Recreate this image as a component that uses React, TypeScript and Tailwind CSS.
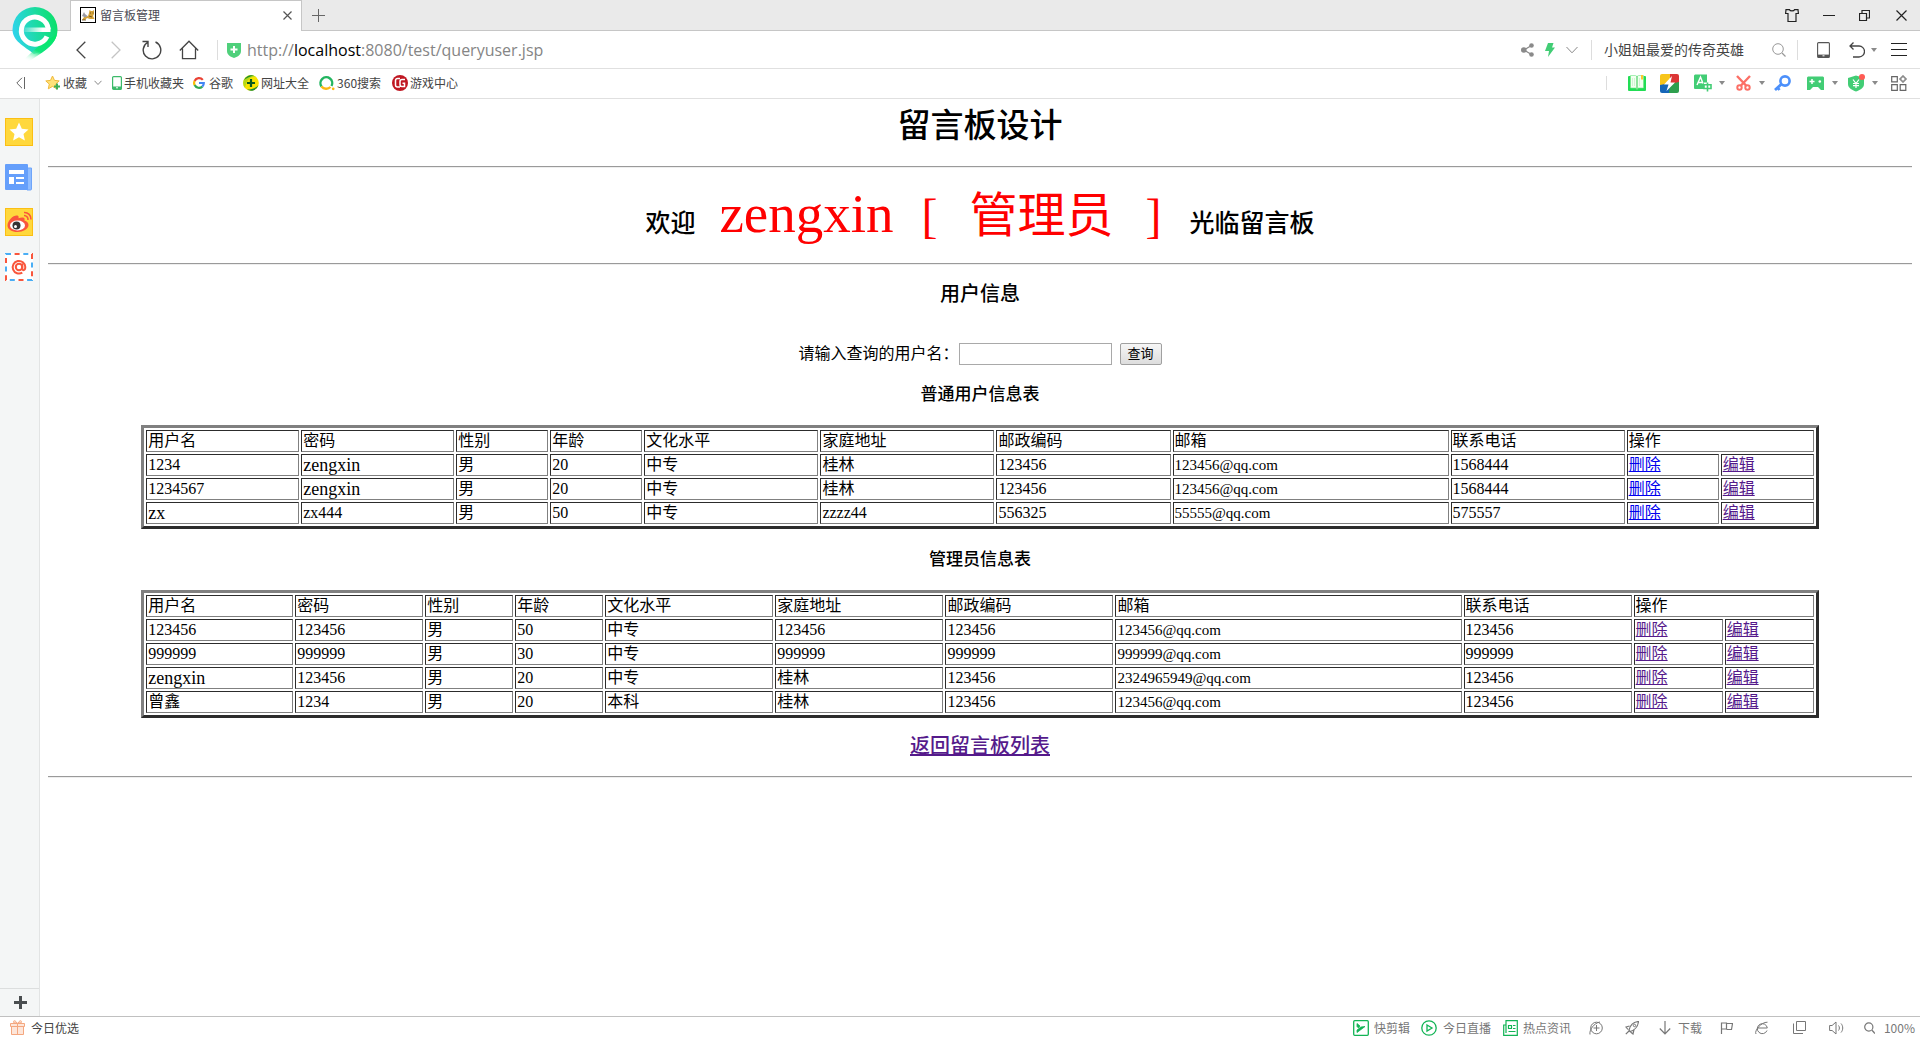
import React from "react";

type IconProps = { className?: string };

/* ---------- shared small pieces ---------- */

const Stroke = ({
  w,
  h,
  children,
  className = "",
}: {
  w: number;
  h: number;
  children: React.ReactNode;
  className?: string;
}) => (
  <svg
    width={w}
    height={h}
    viewBox={`0 0 ${w} ${h}`}
    fill="none"
    stroke="currentColor"
    className={`shrink-0 ${className}`}
    aria-hidden="true"
  >
    {children}
  </svg>
);

const Caret = ({ className = "" }: IconProps) => (
  <svg width="6" height="4" viewBox="0 0 6 4" className={`shrink-0 ${className}`} aria-hidden="true">
    <path d="M0 0h6L3 4z" fill="#8a8a8a" />
  </svg>
);

const IconButton = ({
  label,
  className = "",
  children,
}: {
  label: string;
  className?: string;
  children: React.ReactNode;
}) => (
  <button type="button" aria-label={label} className={`flex shrink-0 items-center ${className}`}>
    {children}
  </button>
);

/* ---------- icons ---------- */

const BrowserLogo = () => (
  <svg width="46" height="56" viewBox="0 0 46 56" aria-hidden="true">
    <defs>
      <linearGradient id="logoBody" x1="0" y1="0.6" x2="1" y2="0.4">
        <stop offset="0" stopColor="#2fd3ee" />
        <stop offset="0.55" stopColor="#1cdba4" />
        <stop offset="1" stopColor="#0be06a" />
      </linearGradient>
      <linearGradient id="logoTail" x1="0.8" y1="0" x2="0.2" y2="1">
        <stop offset="0" stopColor="#04e868" />
        <stop offset="0.6" stopColor="#10e57c" />
        <stop offset="1" stopColor="#ffffff" stopOpacity="0" />
      </linearGradient>
      <linearGradient id="logoBar" x1="0" y1="0" x2="1" y2="0">
        <stop offset="0" stopColor="#ffffff" stopOpacity="0.15" />
        <stop offset="0.7" stopColor="#ffffff" />
      </linearGradient>
    </defs>
    <path d="M23 0a22.500 22.500 0 0 1 22.500 22.500c0 9-5 15-12 20.500L22 47C12 39 .5 34 .5 22.500A22.500 22.500 0 0 1 23 0z" fill="url(#logoBody)" />
    <path d="M45 27c-2 9-8 13-14 18L16 55 10 54 28 38z" fill="url(#logoTail)" />
    <path
      d="M35 29.500A13.500 13.500 0 1 1 36.300 22.500"
      fill="none"
      stroke="#fff"
      strokeWidth="5"
    />
    <path d="M12 20.500h26.500v4.500H12z" fill="url(#logoBar)" />
  </svg>
);

const CatIcon = () => (
  <svg width="16" height="16" viewBox="0 0 16 16" aria-hidden="true">
    <rect x="0.5" y="0.5" width="15" height="15" fill="#fff" stroke="#000" />
    <path d="M2 13l2-3 4-1 1-3 .5-3 1.500 1h1.500L14 3v4l-1 2 1.500 3H10l-3-1-2 2z" fill="#d6a53c" />
    <path d="M2 9l2-4 1 2 2.500 2-2 1.500z" fill="#9a9aa3" />
    <path d="M2 13h4M10 6h1M12.500 6h1M9 9l3 1" stroke="#5a4314" strokeWidth="0.800" />
  </svg>
);

const ShieldPlus = () => (
  <svg width="14" height="16" viewBox="0 0 14 16" aria-hidden="true">
    <path d="M0 1h14v8c0 4-4 6-7 7-3-1-7-3-7-7z" fill="#4fd07b" />
    <path d="M7 4v7M3.500 7.500h7" stroke="#fff" strokeWidth="2" />
  </svg>
);

const StarPlus = () => (
  <svg width="16" height="16" viewBox="0 0 16 16" className="shrink-0" aria-hidden="true">
    <path d="M7.500 1l2 4.400 4.700.5-3.500 3.200 1 4.700-4.200-2.400-4.200 2.400 1-4.700L.8 5.900l4.700-.5z" fill="#ffe27a" stroke="#f0b93a" />
    <path d="M12 8.500v6M9 11.500h6" stroke="#41ad55" strokeWidth="2" />
  </svg>
);

const PhoneGreen = () => (
  <svg width="10" height="14" viewBox="0 0 10 14" className="shrink-0" aria-hidden="true">
    <rect x="0.6" y="0.6" width="8.800" height="12.800" rx="1" fill="#fff" stroke="#3dba6a" strokeWidth="1.200" />
    <path d="M1 10.500h8V13H1z" fill="#3dba6a" />
    <path d="M4 11.800h2" stroke="#fff" />
  </svg>
);

const GoogleG = () => (
  <svg width="12" height="12" viewBox="0 0 12 12" className="shrink-0" fill="none" strokeWidth="2.200" aria-hidden="true">
    <path d="M9.800 2.900A4.900 4.900 0 0 0 1.600 3.900" stroke="#ea4335" />
    <path d="M1.600 3.900a4.900 4.900 0 0 0 0 4.200" stroke="#fbbc05" />
    <path d="M1.600 8.100a4.900 4.900 0 0 0 7.700 1.500" stroke="#34a853" />
    <path d="M9.300 9.600A4.900 4.900 0 0 0 10.800 6H6" stroke="#4285f4" />
  </svg>
);

const NavBall = () => (
  <svg width="16" height="16" viewBox="0 0 16 16" className="shrink-0" aria-hidden="true">
    <circle cx="8" cy="8" r="7.800" fill="#f7e400" />
    <path d="M2 13A7.800 7.800 0 0 1 13 2C8 1 4 4 2 13z" fill="#b5d816" />
    <path d="M1 5A7.800 7.800 0 0 1 11 .8C7 1 4 3 1 5zM4 14.600A7.800 7.800 0 0 0 15.500 10C13 13 9 14.500 4 14.600z" fill="#188a34" />
    <path d="M8 4v8M4 8h8" stroke="#085a20" strokeWidth="2.200" />
  </svg>
);

const SearchRing = () => (
  <svg width="16" height="16" viewBox="0 0 16 16" className="shrink-0" fill="none" strokeWidth="2.400" aria-hidden="true">
    <path d="M2.500 11.500A5.900 5.900 0 1 1 12.500 11" stroke="#23b560" />
    <path d="M2.500 11.500A6 6 0 0 0 11.500 12" stroke="#fdb813" />
    <circle cx="14.200" cy="13.800" r="0.700" stroke="#fdb813" strokeWidth="1.400" />
  </svg>
);

const GameBadge = () => (
  <svg width="16" height="16" viewBox="0 0 16 16" className="shrink-0" fill="none" aria-hidden="true">
    <circle cx="8" cy="8" r="8" fill="#c01722" />
    <path d="M8 3.500H5.500A2 2 0 0 0 3.500 5.500v4.500a2 2 0 0 0 2 2H8M13 4.500H10a2 2 0 0 0-2 2v3a2 2 0 0 0 2 2h2.500V8.200H10.500" stroke="#fff" strokeWidth="1.500" />
  </svg>
);

const BookIcon = () => (
  <svg width="18" height="18" viewBox="0 0 18 18" className="shrink-0" aria-hidden="true">
    <rect x="0" y="2" width="18" height="15" rx="1" fill="#22dd55" />
    <path d="M2.500 1.500h5L9 2.500v12.500l-1.500-1h-5zM15.500 1.500h-5L9 2.500v12.500l1.500-1h5z" fill="#f2fff0" stroke="#6fe587" strokeWidth="0.600" />
    <path d="M9 2v14" stroke="#6fd67f" />
    <path d="M4.500 4v8M6.500 4v8M11.500 4v8" stroke="#d2f3d4" />
    <path d="M13 1h2v5l-1-1-1 1z" fill="#ffc62e" />
  </svg>
);

const ColorBolt = () => (
  <svg width="19" height="19" viewBox="0 0 19 19" className="shrink-0" aria-hidden="true">
    <clipPath id="boltClip">
      <rect width="19" height="19" rx="2" />
    </clipPath>
    <g clipPath="url(#boltClip)">
      <path d="M0 0h12L7 10 0 12z" fill="#f7c51b" />
      <path d="M10 0h9v9l-9 1z" fill="#dc3636" />
      <path d="M19 8v11H8l2-9z" fill="#2e9f4e" />
      <path d="M0 11l10-2-1 10H0z" fill="#1666b8" />
      <path d="M12 2L4 10.500h4.500L6.500 17l8.500-8.500h-4.500z" fill="#fff" />
    </g>
  </svg>
);

const TranslateIcon = () => (
  <svg width="18" height="18" viewBox="0 0 18 18" className="shrink-0" fill="none" aria-hidden="true">
    <path d="M1 0.500h12v8H10V15H1a1 1 0 0 1-1-1V1.500z" fill="#42cd75" />
    <path d="M3 11L6.500 3 9 9.500M4.500 8.500h4" stroke="#fff" strokeWidth="1.400" />
    <path d="M13.500 8.500v9M10 10.800h7v3.700h-7z" stroke="#42cd75" strokeWidth="1.600" />
  </svg>
);

const ScissorsRed = () => (
  <svg width="15" height="16" viewBox="0 0 15 16" className="shrink-0" fill="none" stroke="#fc6f66" strokeWidth="2.400" aria-hidden="true">
    <path d="M1 1l9.500 10M14 1L4.500 11" />
    <circle cx="3.500" cy="12.500" r="2.200" strokeWidth="2" />
    <circle cx="11.500" cy="12.500" r="2.200" strokeWidth="2" />
  </svg>
);

const KeyBlue = () => (
  <svg width="17" height="16" viewBox="0 0 17 16" className="shrink-0" fill="none" stroke="#4c90fb" aria-hidden="true">
    <circle cx="11" cy="6" r="4.600" strokeWidth="2.600" />
    <path d="M7.500 9L1 15M3.500 12.500l2 2.500" strokeWidth="2.800" />
  </svg>
);

const Gamepad = () => (
  <svg width="17" height="15" viewBox="0 0 17 15" className="shrink-0" aria-hidden="true">
    <path d="M1 0.500h15l1 1V14h-3l-3-3H6l-3 3H0V1.500z" fill="#42cd75" />
    <path d="M5 3v5M2.500 5.500h5" stroke="#fff" strokeWidth="1.500" />
    <circle cx="12.800" cy="5.500" r="1.300" fill="#fff" />
  </svg>
);

const YuanShield = () => (
  <svg width="17" height="18" viewBox="0 0 17 18" className="shrink-0" fill="none" aria-hidden="true">
    <path d="M8 1.500l8 2.500v6c0 4-4 6-8 7.500C4 16 0 14 0 10V4z" fill="#42cd75" />
    <path d="M5 5.500l3 4 3-4M8 9.500V14M5 9.500h6M5 11.700h6" stroke="#fff" strokeWidth="1.200" />
    <circle cx="14" cy="3" r="3" fill="#ff5b54" />
  </svg>
);

/* ---------- top bars ---------- */

const TabBar = () => (
  <header className="flex h-[31px] border-b border-[#c6c6c6] bg-[#eaeaea] pl-[70px]">
    <div className="-mb-px flex h-[31px] w-[232px] items-center border-x border-t border-[#c6c6c6] bg-white pr-[9px] pb-0.5 pl-[9px] text-[12px] text-[#4a4a55]">
      <CatIcon />
      <span className="ml-1">留言板管理</span>
      <IconButton label="关闭标签" className="ml-auto text-[#555]">
        <Stroke w={9} h={9}><path d="M.5.5l8 8M8.500.5l-8 8" strokeWidth="1.200" /></Stroke>
      </IconButton>
    </div>
    <IconButton label="新标签" className="ml-[10px] text-[#666]">
      <Stroke w={13} h={13}><path d="M6.500 0v13M0 6.500h13" /></Stroke>
    </IconButton>
    <div className="ml-auto flex items-center pr-[13px] text-[#222]">
      <IconButton label="皮肤">
        <Stroke w={14} h={13}><path d="M4.500.7H1L.6 4.500h2.400v8h8v-8h2.400L13 .7H9.500c-.5 1.500-4.500 1.500-5 0z" strokeWidth="1.200" /></Stroke>
      </IconButton>
      <IconButton label="最小化" className="ml-6">
        <Stroke w={12} h={3}><path d="M0 1.500h12" /></Stroke>
      </IconButton>
      <IconButton label="还原" className="ml-6">
        <Stroke w={11} h={11}><path d="M.5 3.500h7v7h-7zM3 3V.5h7.500V8H8" strokeWidth="1.200" /></Stroke>
      </IconButton>
      <IconButton label="关闭" className="ml-[26px]">
        <Stroke w={11} h={11}><path d="M.5.5l10 10M10.500.5l-10 10" strokeWidth="1.200" /></Stroke>
      </IconButton>
    </div>
  </header>
);

const AddressBar = () => (
  <div className="flex h-[38px] items-center border-b border-[#e0e0e0] bg-white pr-[13px] pl-[76px] text-[#444]">
    <IconButton label="后退">
      <Stroke w={10} h={18}><path d="M9.300.7L1 9l8.300 8.300" strokeWidth="1.300" /></Stroke>
    </IconButton>
    <IconButton label="前进" className="ml-[25px] text-[#c4c4c4]">
      <Stroke w={10} h={18}><path d="M.7.7L9 9 .7 17.300" strokeWidth="1.300" /></Stroke>
    </IconButton>
    <IconButton label="刷新" className="ml-[21px]">
      <Stroke w={20} h={20}><path d="M13.500 2a8.800 8.800 0 1 1-8 .5M.5 1.500H6V7" strokeWidth="1.400" /></Stroke>
    </IconButton>
    <IconButton label="主页" className="ml-[17px]">
      <Stroke w={20} h={20}><path d="M.8 10.500L10 1.200l9.200 9.300M3.500 8.500v10.200h13V8.500" strokeWidth="1.300" /></Stroke>
    </IconButton>
    <span className="ml-[18px] h-5 w-px bg-[#ddd]" />
    <span className="ml-[9px]"><ShieldPlus /></span>
    <p className="ml-[6px] font-['Open_Sans','Noto_Sans',sans-serif] text-[16px] text-[#858585]">
      http://<span className="text-black">localhost</span>:8080/test/queryuser.jsp
    </p>
    <div className="ml-auto flex items-center">
      <IconButton label="分享" className="text-[#8a8a8a]">
        <svg width="13" height="14" viewBox="0 0 13 14" aria-hidden="true">
          <path d="M10.500 2.500L3 7l7.500 4.500" fill="none" stroke="#8a8a8a" strokeWidth="1.300" />
          <g fill="#8a8a8a"><circle cx="10.500" cy="2.500" r="2.300" /><circle cx="2.800" cy="7" r="2.800" /><circle cx="10.500" cy="11.500" r="2.300" /></g>
        </svg>
      </IconButton>
      <IconButton label="极速模式" className="ml-[11px]">
        <svg width="10" height="14" viewBox="0 0 10 14" aria-hidden="true"><path d="M3 0h5.500L7 4.500h3L3 14l1-6H0z" fill="#42cd75" /></svg>
      </IconButton>
      <IconButton label="更多模式" className="ml-[11px] text-[#888]">
        <Stroke w={12} h={8}><path d="M.5 1L6 6.800 11.500 1" /></Stroke>
      </IconButton>
      <span className="ml-[13px] h-5 w-px bg-[#ddd]" />
      <input
        aria-label="搜索"
        defaultValue="小姐姐最爱的传奇英雄"
        className="ml-3 w-[148px] bg-transparent text-[14px] text-[#444] outline-none"
      />
      <IconButton label="开始搜索" className="ml-5 text-[#999]">
        <Stroke w={14} h={14}><circle cx="6" cy="6" r="5.300" /><path d="M10 10l3.500 3.500" strokeWidth="1.200" /></Stroke>
      </IconButton>
      <span className="ml-[11px] h-5 w-px bg-[#ddd]" />
      <IconButton label="手机" className="ml-[19px] text-[#555]">
        <Stroke w={13} h={16}><rect x=".6" y=".6" width="11.800" height="14.800" rx="1" strokeWidth="1.100" /><path d="M1 13.800h11" strokeWidth="2.400" /><path d="M5.500 13.800h2" stroke="#fff" /></Stroke>
      </IconButton>
      <IconButton label="恢复页面" className="ml-[19px]">
        <Stroke w={16} h={16}><path d="M4.500.5L1 4l3.500 3.500M1 4h9a5.500 5.500 0 0 1 0 11H4" strokeWidth="1.300" /></Stroke>
        <Caret className="ml-[6px]" />
      </IconButton>
      <IconButton label="菜单" className="ml-[14px] text-[#222]">
        <Stroke w={16} h={15}><path d="M0 1.500h16M0 7.500h16M0 13.500h16" /></Stroke>
      </IconButton>
    </div>
  </div>
);

const Bookmark = ({
  icon,
  label,
  className,
}: {
  icon: React.ReactNode;
  label: string;
  className: string;
}) => (
  <a href="#" className={`flex items-center gap-0.5 whitespace-nowrap ${className}`}>
    {icon}
    {label}
  </a>
);

const BookmarkBar = () => (
  <nav className="flex h-[30px] items-center border-b border-[#e0e0e0] bg-white pr-[13px] pb-px pl-4 text-[12px] text-[#444]">
    <IconButton label="收起" className="text-[#666]">
      <Stroke w={9} h={12}><path d="M6 .8L.8 6 6 11.200M8.500 0v12" /></Stroke>
    </IconButton>
    <Bookmark icon={<StarPlus />} label="收藏" className="ml-[20px]" />
    <Stroke w={8} h={6} className="ml-[7px] text-[#888]"><path d="M.5.8L4 4.500 7.500.8" /></Stroke>
    <Bookmark icon={<PhoneGreen />} label="手机收藏夹" className="ml-[10px]" />
    <Bookmark icon={<span className="mr-0.5"><GoogleG /></span>} label="谷歌" className="ml-[9px]" />
    <Bookmark icon={<NavBall />} label="网址大全" className="ml-[10px]" />
    <Bookmark icon={<SearchRing />} label="360搜索" className="ml-[10px]" />
    <Bookmark icon={<GameBadge />} label="游戏中心" className="ml-[11px]" />
    <div className="ml-auto flex items-center">
      <span className="h-[14px] w-px bg-[#ddd]" />
      <IconButton label="阅读" className="ml-[21px]"><BookIcon /></IconButton>
      <IconButton label="加速" className="ml-[14px]"><ColorBolt /></IconButton>
      <IconButton label="翻译" className="ml-[15px]"><TranslateIcon /><Caret className="ml-[7px]" /></IconButton>
      <IconButton label="截图" className="ml-[11px]"><ScissorsRed /><Caret className="ml-[8px]" /></IconButton>
      <IconButton label="登录管家" className="ml-[9px]"><KeyBlue /></IconButton>
      <IconButton label="游戏" className="ml-4"><Gamepad /><Caret className="ml-[8px]" /></IconButton>
      <IconButton label="网银" className="ml-[10px]"><YuanShield /><Caret className="ml-[7px]" /></IconButton>
      <IconButton label="扩展" className="ml-[13px] text-[#666]">
        <Stroke w={16} h={16}><path d="M.7 1.700h5.600v5.100H.7zM.7 9.700h5.600v5.600H.7zM9.200 9.700h5.600v5.600H9.200z" strokeWidth="1.200" /><path d="M11 1h2v2h2v2h-2v2h-2V5H9V3h2z" strokeWidth="1" /></Stroke>
      </IconButton>
    </div>
  </nav>
);

/* ---------- left sidebar ---------- */

const Sidebar = () => (
  <aside className="flex w-10 shrink-0 flex-col border-r border-[#e2e4e4] bg-[#f4f6f6]">
    <div className="flex flex-col items-center gap-[17px] pt-[19px] pr-[1px]">
      <IconButton label="收藏夹">
        <svg width="28" height="28" viewBox="0 0 28 28" aria-hidden="true">
          <rect x=".5" y=".5" width="27" height="27" fill="#ffd83d" stroke="#fbbf14" />
          <path d="M14 4.500l2.800 6.200 6.700.7-5 4.500 1.400 6.600L14 19.200l-5.900 3.300 1.400-6.600-5-4.500 6.700-.7z" fill="#fff" />
        </svg>
      </IconButton>
      <IconButton label="新闻">
        <svg width="28" height="28" viewBox="0 0 28 28" aria-hidden="true">
          <path d="M22 5h4.500v21a1 1 0 0 1-1 1H22z" fill="#8fbcff" stroke="#6ea5fa" />
          <rect x="0" y="1" width="23" height="26" rx="1" fill="#659ffb" />
          <path d="M4 7h15v4H4zM4 14h5v7H4zM11 14h8v2h-8zM11 19h8v2h-8z" fill="#fff" />
        </svg>
      </IconButton>
      <IconButton label="微博">
        <svg width="28" height="28" viewBox="0 0 28 28" aria-hidden="true">
          <rect x=".5" y=".5" width="27" height="27" fill="#ffd83d" stroke="#fbbf14" />
          <path d="M2.500 17.500C2.500 12 9 6.500 12.500 7.500c1.200.3 1.300 1.600 1 2.800 2.500-1 5.500-1.200 6 .3.400 1-.2 1.700 0 2 2.500.8 4 2.200 4 4.400 0 4-5.500 7-11 7s-10-2.500-10-6.500z" fill="#f9563c" />
          <ellipse cx="12.500" cy="17.500" rx="7.500" ry="5" fill="#fff" />
          <circle cx="11.500" cy="17.500" r="4" fill="#333" />
          <circle cx="10.500" cy="18.500" r="1.500" fill="#fff" />
          <path d="M19 7.500a4 4 0 0 1 4 4.500M19 4.500a6.500 6.500 0 0 1 7 7" fill="none" stroke="#f9563c" strokeWidth="1.600" />
        </svg>
      </IconButton>
      <IconButton label="邮箱">
        <svg width="28" height="28" viewBox="0 0 28 28" aria-hidden="true">
          <rect width="28" height="28" fill="#fff" />
          <g fill="none" strokeWidth="2">
            <rect x="1" y="1" width="26" height="26" stroke="#49aef5" strokeDasharray="5 12.300" />
            <rect x="1" y="1" width="26" height="26" stroke="#f9563c" strokeDasharray="5 12.300" strokeDashoffset="-8.600" />
          </g>
          <circle cx="14" cy="14" r="3.200" fill="none" stroke="#f9563c" strokeWidth="2" />
          <path d="M17.300 10.500v5c0 2.500 3 2.300 3-1.500a6.300 6.300 0 1 0-3 5.600" fill="none" stroke="#f9563c" strokeWidth="2" />
        </svg>
      </IconButton>
    </div>
    <button
      type="button"
      aria-label="添加"
      className="mt-auto flex h-7 items-center justify-center border-t border-[#dcdede] pl-0.5 text-[#4a4e50]"
    >
      <Stroke w={13} h={13}><path d="M6.500 0v13M0 6.500h13" strokeWidth="3" /></Stroke>
    </button>
  </aside>
);

/* ---------- page content ---------- */

const Rule = ({ className = "" }: IconProps) => (
  <hr className={`h-0.5 border-t border-b border-t-[#9a9a9a] border-b-[#eeeeee] ${className}`} />
);

const HEADERS = ["用户名", "密码", "性别", "年龄", "文化水平", "家庭地址", "邮政编码", "邮箱", "联系电话"];

const NORMAL_USERS = [
  ["1234", "zengxin", "男", "20", "中专", "桂林", "123456", "123456@qq.com", "1568444"],
  ["1234567", "zengxin", "男", "20", "中专", "桂林", "123456", "123456@qq.com", "1568444"],
  ["zx", "zx444", "男", "50", "中专", "zzzz44", "556325", "55555@qq.com", "575557"],
];

const ADMIN_USERS = [
  ["123456", "123456", "男", "50", "中专", "123456", "123456", "123456@qq.com", "123456"],
  ["999999", "999999", "男", "30", "中专", "999999", "999999", "999999@qq.com", "999999"],
  ["zengxin", "123456", "男", "20", "中专", "桂林", "123456", "2324965949@qq.com", "123456"],
  ["曾鑫", "1234", "男", "20", "本科", "桂林", "123456", "123456@qq.com", "123456"],
];

const NORMAL_COLS = [
  "w-[153px]", "w-[153px]", "w-[92px]", "w-[92px]", "w-[174px]", "w-[174px]",
  "w-[174px]", "w-[276px]", "w-[174px]", "w-[92px]", "w-[93px]",
];

const ADMIN_COLS = [
  "w-[147px]", "w-[128px]", "w-[88px]", "w-[88px]", "w-[168px]", "w-[168px]",
  "w-[168px]", "w-[346px]", "w-[168px]", "w-[89px]", "w-[89px]",
];

const CELL =
  "h-[22px] border border-t-[#2c2c2c] border-l-[#2c2c2c] border-r-[#808080] border-b-[#808080] p-px text-left font-normal whitespace-nowrap";

const textSize = (value: string) => {
  if (value.includes("@")) return "text-[15px]";
  if (/^[a-z]+$/.test(value)) return "text-[18px]";
  return "text-[16px]";
};

const UserTable = ({
  cols,
  rows,
  label,
  deleteColor,
}: {
  cols: string[];
  rows: string[][];
  label: string;
  deleteColor: string;
}) => (
  <table
    aria-label={label}
    className="mx-auto mt-5 w-[90%] table-fixed border-separate border-spacing-[2px] border-[3px] border-t-[#808080] border-r-[#2c2c2c] border-b-[#2c2c2c] border-l-[#808080] leading-[18px]"
  >
    <colgroup>
      {cols.map((c, i) => (
        <col key={i} className={c} />
      ))}
    </colgroup>
    <thead>
      <tr>
        {HEADERS.map((h) => (
          <th key={h} scope="col" className={CELL}>{h}</th>
        ))}
        <th scope="col" colSpan={2} className={CELL}>操作</th>
      </tr>
    </thead>
    <tbody>
      {rows.map((row, r) => (
        <tr key={r}>
          {row.map((value, c) => (
            <td key={c} className={`${CELL} ${textSize(value)}`}>{value}</td>
          ))}
          <td className={CELL}><a href="#" className={`underline ${deleteColor}`}>删除</a></td>
          <td className={CELL}><a href="#" className="text-[#551a8b] underline">编辑</a></td>
        </tr>
      ))}
    </tbody>
  </table>
);

const Content = () => (
  <main className="min-w-0 flex-1 overflow-auto bg-white p-2 font-['Liberation_Serif','Noto_Sans_CJK_SC',serif] text-[16px] text-black">
    <h1 className="text-center text-[33px] leading-[38px] font-medium">留言板设计</h1>
    <Rule className="mt-[21px]" />
    <h2 className="flex h-[95px] items-baseline justify-center pt-3 text-[25px] font-medium">
      <span>欢迎</span>
      <span className="ml-6 text-[55px] leading-[64px] font-normal text-[#ff0000]">zengxin</span>
      <span className="ml-7 text-[48px] font-light text-[#ff0000]">[</span>
      <span className="ml-8 text-[48px] font-normal text-[#ff0000]">管理员</span>
      <span className="ml-8 text-[48px] font-light text-[#ff0000]">]</span>
      <span className="ml-7">光临留言板</span>
    </h2>
    <Rule />
    <h3 className="mt-4 text-center text-[20px] leading-[26px] font-medium">用户信息</h3>
    <form className="mt-9 flex h-[22px] items-center justify-center" onSubmit={(e) => e.preventDefault()}>
      <label htmlFor="username">请输入查询的用户名：</label>
      <input id="username" type="text" className="h-[22px] w-[153px] border border-[#a9a9a9] bg-white px-px" />
      <button
        type="submit"
        className="ml-2 h-[22px] w-[42px] rounded-[2px] border border-[#a0a0a0] bg-linear-to-b from-[#f6f6f6] to-[#dddddd] text-[13px] leading-[18px]"
      >
        查询
      </button>
    </form>
    <h4 className="mt-[19px] text-center text-[17px] leading-[21px] font-medium">普通用户信息表</h4>
    <UserTable cols={NORMAL_COLS} rows={NORMAL_USERS} label="普通用户信息表" deleteColor="text-[#0000ee]" />
    <h4 className="mt-5 text-center text-[17px] leading-[21px] font-medium">管理员信息表</h4>
    <UserTable cols={ADMIN_COLS} rows={ADMIN_USERS} label="管理员信息表" deleteColor="text-[#551a8b]" />
    <p className="mt-4 text-center text-[20px] leading-6 font-medium">
      <a href="#" className="text-[#551a8b] underline">返回留言板列表</a>
    </p>
    <Rule className="mt-[18px]" />
  </main>
);

/* ---------- status bar ---------- */

const StatusBar = () => (
  <footer className="flex h-6 items-center border-t border-[#c0c0c0] bg-white pr-[5px] pb-0.5 pl-[10px] text-[12px] text-[#777]">
    <a href="#" className="flex items-center gap-[6px] text-[#444]">
      <svg width="15" height="15" viewBox="0 0 15 15" fill="#fde6da" stroke="#f4a77f" aria-hidden="true">
        <path d="M1.500 6.500h12v8h-12zM.5 3.500h14v3H.5zM7.500 4v10M7 3C5-.5 2.500.5 4 3zM8 3c2-3.500 4.500-2.500 3 0z" />
      </svg>
      今日优选
    </a>
    <div className="ml-auto flex items-center whitespace-nowrap">
      <a href="#" className="flex items-center gap-[5px]">
        <Stroke w={16} h={16} className="text-[#12b455]"><rect x=".7" y=".7" width="14.600" height="14.600" rx="1" strokeWidth="1.300" /><path d="M4 3.500l3 2.500L5.500 8 4 6.500zM12 6.500L4 12.500V10l4-3z" fill="currentColor" strokeWidth="0.800" /></Stroke>
        快剪辑
      </a>
      <a href="#" className="ml-[11px] flex items-center gap-[6px]">
        <Stroke w={16} h={16} className="text-[#12b455]"><circle cx="8" cy="8" r="7.200" strokeWidth="1.300" /><path d="M6 5l5 3-5 3z" strokeWidth="1.300" /></Stroke>
        今日直播
      </a>
      <a href="#" className="ml-3 flex items-center gap-[5px]">
        <Stroke w={15} h={16} className="text-[#12b455]"><path d="M3 .7h11.300v14.600H.7V5H3zM3 5v8M5.500 5.500h3v3h-3zM10 5.500h2.500M10 8.500h2.500M5.500 11.500h7" strokeWidth="1.200" /></Stroke>
        热点资讯
      </a>
      <IconButton label="加速球" className="ml-[18px]">
        <Stroke w={14} h={14}><circle cx="7.500" cy="7" r="5.800" /><path d="M1 13.500C0 9 5 2 11 1M7.500 4v6M4.500 7h6" /></Stroke>
      </IconButton>
      <IconButton label="清理" className="ml-[22px]">
        <Stroke w={14} h={14}><path d="M4 9c1-4 4-8 9.500-8.500C13 6 9 9.500 5 10.500zM4.500 5L1 6l2 2.500M9 8.500L8 13l-2.500-2M4 10L.8 13.200" strokeWidth="1.200" /><circle cx="9.500" cy="4.500" r="1.200" /></Stroke>
      </IconButton>
      <a href="#" className="ml-[20px] flex items-center gap-[7px]">
        <Stroke w={12} h={14}><path d="M6 0v13M.8 7.500L6 13l5.200-5.500" strokeWidth="1.200" /></Stroke>
        下载
      </a>
      <IconButton label="举报" className="ml-[18px]">
        <Stroke w={13} h={12}><path d="M1.500 12V1h5v6h-5M6.500 1.500h6L11.500 7.500h-5" strokeWidth="1.200" /></Stroke>
      </IconButton>
      <IconButton label="内核" className="ml-[22px]">
        <Stroke w={14} h={14}><path d="M12 9.500A5 5 0 1 1 12.300 7H3M1 13C-1 10 6 1 12.500 1.200" /></Stroke>
      </IconButton>
      <IconButton label="窗口" className="ml-6">
        <Stroke w={13} h={13}><path d="M3.500.5h9v9h-9zM.5 2.500v10H10" /></Stroke>
      </IconButton>
      <IconButton label="声音" className="ml-[23px]">
        <Stroke w={15} h={14}><path d="M.6 4.500h2.500L7 1v12L3.100 9.500H.6zM9.500 4.500c1.200 1.500 1.200 3.500 0 5M12 2.500c2.300 2.500 2.300 6.500 0 9" /></Stroke>
      </IconButton>
      <button type="button" className="ml-5 flex items-center gap-[9px]">
        <Stroke w={11} h={12}><circle cx="4.800" cy="5" r="4.100" strokeWidth="1.200" /><path d="M8 8.200l3 3.300" strokeWidth="1.300" /></Stroke>
        <span className="text-[12px]">100%</span>
      </button>
    </div>
  </footer>
);

export default function App() {
  return (
    <div className="relative flex h-screen flex-col overflow-hidden bg-white font-['Noto_Sans_CJK_SC',sans-serif]">
      <TabBar />
      <AddressBar />
      <BookmarkBar />
      <div className="flex min-h-0 flex-1">
        <Sidebar />
        <Content />
      </div>
      <StatusBar />
      <div className="absolute top-[7px] left-3">
        <BrowserLogo />
      </div>
    </div>
  );
}
